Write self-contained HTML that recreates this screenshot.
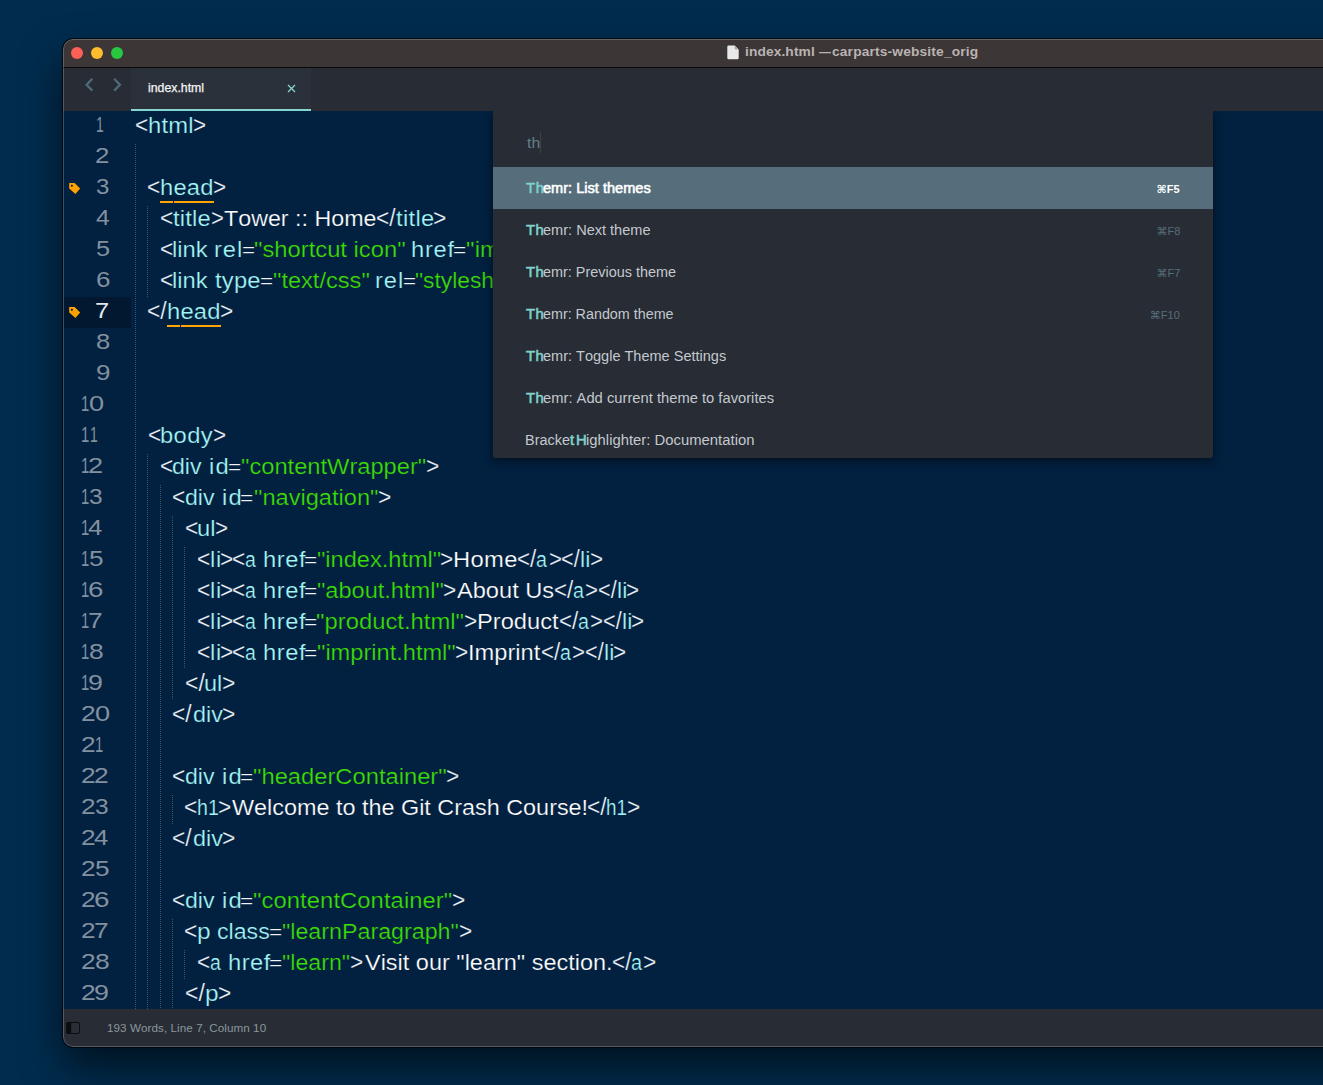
<!DOCTYPE html>
<html lang="en">
<head>
<meta charset="utf-8">
<title>index.html — carparts-website_orig</title>
<style>
*{box-sizing:border-box;margin:0;padding:0}
html,body{width:1323px;height:1085px;overflow:hidden}
body{position:relative;font-family:"Liberation Sans","DejaVu Sans",sans-serif;
 background:#012c4e;}
#win{position:absolute;left:63px;top:39px;width:1400px;height:1008px;border-radius:10px;
 background:#02203f;box-shadow:0 0 0 1px rgba(0,0,0,.7),0 20px 40px rgba(0,0,0,.6);overflow:hidden}
#win:after{content:"";position:absolute;inset:0;border-radius:10px;border:1px solid rgba(255,255,255,.22);pointer-events:none;z-index:50}
#titlebar{position:absolute;left:0;top:0;width:100%;height:29px;background:#3c3636;border-bottom:1px solid #0a0a0a}
.tl{position:absolute;top:8px;width:12px;height:12px;border-radius:50%}
.fx{position:absolute;white-space:pre;transform-origin:0 0;font-kerning:none}
.title{top:5px;font-size:13px;font-weight:bold;color:#b9b3b3;line-height:16px}
#docico{position:absolute;left:664px;top:6px}
#tabbar{position:absolute;left:0;top:29px;width:100%;height:43px;background:#282c35}
#tab{position:absolute;left:68px;top:0;width:180px;height:43px;background:#2b313b}
#tab:after{content:"";position:absolute;left:0;right:0;bottom:0;height:2.5px;background:#84d5cf}
#tabname{top:13px;font-size:12px;color:#f2f4f5;line-height:14px;-webkit-text-stroke:0.25px #f2f4f5}
#editor{position:absolute;left:0;top:72px;width:100%;height:899px;background:#02203f}
#status{position:absolute;left:0;top:970px;width:100%;height:38px;background:#282c35}
#stext{top:12px;font-size:11px;line-height:14px;color:#8b979c}
.ln{position:absolute;left:0;white-space:pre;font-size:22px;line-height:31px;height:31px;color:#fff}
.ln span{position:absolute;top:0px;-webkit-text-stroke:0.22px #02203f;transform-origin:0 0;font-kerning:none}
.num{position:absolute;left:0;font-size:22px;line-height:31px;height:31px;color:#8291a0;white-space:pre}
.num span{position:absolute;top:-1px;transform-origin:0 0}
.num.cur{color:#dfe6ec}
.ln .p{color:#f0f4fa;font-size:23.5px;top:0px}.ln .e{font-size:19px;top:0px}
.t{color:#a4f6f7}.s{color:#3cdc05}.w{color:#fff}
#layer{position:absolute;left:0;top:0;width:1323px;height:1085px;overflow:hidden;pointer-events:none}
#clip{position:absolute;left:63px;top:111px;width:1260px;height:898px;overflow:hidden}
#clip>div{position:absolute;left:-63px;top:-111px;width:1323px;height:1085px}
#gutcur{position:absolute;left:64px;top:297px;width:67px;height:30.5px;background:#021830}
.ul{position:absolute;height:2px;background:#ffa400}
.tag{position:absolute;left:68px}
.guide{position:absolute;width:1px;background:repeating-linear-gradient(180deg,#3b546e 0,#3b546e 1px,transparent 1px,transparent 2px)}
#palclip{position:absolute;left:0;top:111px;width:1323px;height:500px;overflow:hidden;pointer-events:none}
#pal{position:absolute;left:492.5px;top:0;width:720.7px;height:347px;background:#282c35;box-shadow:0 3px 10px rgba(0,0,0,.5);border-radius:0 0 3px 3px;overflow:hidden}
.row{position:absolute;left:0;width:720px;height:42px;font-size:14px;line-height:42px;color:#c3c9ce;white-space:nowrap}
.row .fx{top:0px}
.row .key{font-size:11px;color:#566e7a;top:1px}
.row b{color:#7fd1c9;font-weight:normal}
.sb{-webkit-text-stroke:0.55px currentColor}
.sb b{-webkit-text-stroke:0.55px #7fd1c9}
.row.sel{background:#566e7b;color:#fff}
.row.sel .key{color:#fff;font-weight:bold}
#pin{top:22px;font-size:15px;line-height:20px;color:#62808c}
</style>
</head>
<body>
<div id="win">
 <div id="titlebar">
  <div class="tl" style="left:8px;background:#fe5f57"></div>
  <div class="tl" style="left:28px;background:#febc2e"></div>
  <div class="tl" style="left:48px;background:#28c840"></div>
  <svg id="docico" width="13" height="15" viewBox="0 0 13 15"><path d="M1.5 0.5h6.2l4 4v8.6a1.2 1.2 0 0 1-1.2 1.2h-9a1.2 1.2 0 0 1-1.2-1.2v-11.4a1.2 1.2 0 0 1 1.2-1.2z" fill="#e9e9e9"/><path d="M7.7 0.5v3a1 1 0 0 0 1 1h3z" fill="#a9a9a9"/></svg>
  <div class="fx title" style="left:682.14px;letter-spacing:0.087px;transform:scaleX(1.060)">index.html</div><div class="fx title" style="left:755.80px;transform:scaleX(0.923)">—</div><div class="fx title" style="left:769.36px;letter-spacing:0.139px;transform:scaleX(1.060)">carparts-website_orig</div>
 </div>
 <div id="tabbar">
  <svg style="position:absolute;left:21px;top:9px" width="40" height="16" viewBox="0 0 40 16"><path d="M8.3 1.8L2.6 7.8L8.3 13.6" fill="none" stroke="#4e6a79" stroke-width="2.3"/><path d="M30.2 1.8L35.9 7.8L30.2 13.6" fill="none" stroke="#4e6a79" stroke-width="2.3"/></svg>
  <div id="tab"><div id="tabname" class="fx" style="left:17.08px;transform:scaleX(1.025)">index.html</div>
   <svg style="position:absolute;left:156px;top:16px" width="9" height="9" viewBox="0 0 9 9"><path d="M1 1L8 8M8 1L1 8" stroke="#84d5cf" stroke-width="1.3" fill="none"/></svg>
  </div>
 </div>
 <div id="editor"></div>
 <div id="status">
  <svg style="position:absolute;left:3px;top:13px" width="14" height="12" viewBox="0 0 14 12"><rect x="0.5" y="0.5" width="13" height="11" rx="1.6" fill="#2a2e37" stroke="#0d0e11"/><path d="M2 0.5h3.2v11h-3.2a1.5 1.5 0 0 1-1.5-1.5v-8a1.5 1.5 0 0 1 1.5-1.5z" fill="#0b0c0f"/></svg>
  <div id="stext" class="fx" style="left:44.31px;letter-spacing:0.058px;transform:scaleX(1.060)">193 Words, Line 7, Column 10</div>
 </div>
</div>
<div id="clip"><div>
 <div id="gutcur"></div>
 <svg class="tag" style="top:182px" width="13" height="13" viewBox="0 0 13 13"><path fill-rule="evenodd" fill="#ffa200" d="M1.2 1H6.6L12.2 6.6L7.4 12L1.2 6.5ZM3.9 2.75a0.95 0.95 0 1 0 0.001 0Z"/></svg>
 <svg class="tag" style="top:306px" width="13" height="13" viewBox="0 0 13 13"><path fill-rule="evenodd" fill="#ffa200" d="M1.2 1H6.6L12.2 6.6L7.4 12L1.2 6.5ZM3.9 2.75a0.95 0.95 0 1 0 0.001 0Z"/></svg>
 <div class="ul" style="left:159.9px;top:201px;width:13.1px"></div><div class="ul" style="left:174px;top:201px;width:40.1px"></div>
 <div class="ul" style="left:166.9px;top:325px;width:13.1px"></div><div class="ul" style="left:181px;top:325px;width:40.1px"></div>
 <div class="guide" style="left:135.0px;top:144px;height:865px"></div>
<div class="guide" style="left:147.3px;top:206px;height:91px"></div>
<div class="guide" style="left:147.3px;top:454px;height:555px"></div>
<div class="guide" style="left:159.6px;top:485px;height:524px"></div>
<div class="guide" style="left:171.9px;top:516px;height:184px"></div>
<div class="guide" style="left:171.9px;top:795px;height:29px"></div>
<div class="guide" style="left:171.9px;top:919px;height:90px"></div>
<div class="guide" style="left:184.2px;top:547px;height:122px"></div>
<div class="guide" style="left:184.2px;top:950px;height:29px"></div>
<div class="num" id="N1" style="top:110px"><span style="left:95.54px;transform:scaleX(0.633)">1</span></div>
<div class="num" id="N2" style="top:141px"><span style="left:95.30px;transform:scaleX(1.177)">2</span></div>
<div class="num" id="N3" style="top:172px"><span style="left:95.68px;transform:scaleX(1.093)">3</span></div>
<div class="num" id="N4" style="top:203px"><span style="left:95.64px;transform:scaleX(1.119)">4</span></div>
<div class="num" id="N5" style="top:234px"><span style="left:95.99px;transform:scaleX(1.150)">5</span></div>
<div class="num" id="N6" style="top:265px"><span style="left:95.68px;transform:scaleX(1.182)">6</span></div>
<div class="num cur" id="N7" style="top:296px"><span style="left:94.69px;transform:scaleX(1.160)">7</span></div>
<div class="num" id="N8" style="top:327px"><span style="left:95.89px;transform:scaleX(1.162)">8</span></div>
<div class="num" id="N9" style="top:358px"><span style="left:95.58px;transform:scaleX(1.181)">9</span></div>
<div class="num" id="N10" style="top:389px"><span style="left:80.87px;transform:scaleX(0.675)">1</span><span style="left:88.94px;transform:scaleX(1.236)">0</span></div>
<div class="num" id="N11" style="top:420px"><span style="left:80.87px;transform:scaleX(0.675)">1</span><span style="left:89.54px;transform:scaleX(0.633)">1</span></div>
<div class="num" id="N12" style="top:451px"><span style="left:80.87px;transform:scaleX(0.675)">1</span><span style="left:88.23px;transform:scaleX(1.237)">2</span></div>
<div class="num" id="N13" style="top:482px"><span style="left:80.87px;transform:scaleX(0.675)">1</span><span style="left:89.07px;transform:scaleX(1.112)">3</span></div>
<div class="num" id="N14" style="top:513px"><span style="left:80.87px;transform:scaleX(0.675)">1</span><span style="left:88.41px;transform:scaleX(1.173)">4</span></div>
<div class="num" id="N15" style="top:544px"><span style="left:80.87px;transform:scaleX(0.675)">1</span><span style="left:88.95px;transform:scaleX(1.189)">5</span></div>
<div class="num" id="N16" style="top:575px"><span style="left:80.87px;transform:scaleX(0.675)">1</span><span style="left:88.19px;transform:scaleX(1.261)">6</span></div>
<div class="num" id="N17" style="top:606px"><span style="left:80.87px;transform:scaleX(0.675)">1</span><span style="left:87.65px;transform:scaleX(1.200)">7</span></div>
<div class="num" id="N18" style="top:637px"><span style="left:80.87px;transform:scaleX(0.675)">1</span><span style="left:88.85px;transform:scaleX(1.201)">8</span></div>
<div class="num" id="N19" style="top:668px"><span style="left:80.87px;transform:scaleX(0.675)">1</span><span style="left:88.34px;transform:scaleX(1.220)">9</span></div>
<div class="num" id="N20" style="top:699px"><span style="left:81.28px;transform:scaleX(1.197)">2</span><span style="left:94.94px;transform:scaleX(1.236)">0</span></div>
<div class="num" id="N21" style="top:730px"><span style="left:81.28px;transform:scaleX(1.197)">2</span><span style="left:94.87px;transform:scaleX(0.675)">1</span></div>
<div class="num" id="N22" style="top:761px"><span style="left:81.28px;transform:scaleX(1.197)">2</span><span style="left:94.28px;transform:scaleX(1.197)">2</span></div>
<div class="num" id="N23" style="top:792px"><span style="left:81.28px;transform:scaleX(1.197)">2</span><span style="left:95.07px;transform:scaleX(1.112)">3</span></div>
<div class="num" id="N24" style="top:823px"><span style="left:81.28px;transform:scaleX(1.197)">2</span><span style="left:94.41px;transform:scaleX(1.173)">4</span></div>
<div class="num" id="N25" style="top:854px"><span style="left:81.28px;transform:scaleX(1.197)">2</span><span style="left:94.95px;transform:scaleX(1.189)">5</span></div>
<div class="num" id="N26" style="top:885px"><span style="left:81.28px;transform:scaleX(1.197)">2</span><span style="left:94.19px;transform:scaleX(1.261)">6</span></div>
<div class="num" id="N27" style="top:916px"><span style="left:81.28px;transform:scaleX(1.197)">2</span><span style="left:93.65px;transform:scaleX(1.200)">7</span></div>
<div class="num" id="N28" style="top:947px"><span style="left:81.28px;transform:scaleX(1.197)">2</span><span style="left:94.85px;transform:scaleX(1.201)">8</span></div>
<div class="num" id="N29" style="top:978px"><span style="left:81.28px;transform:scaleX(1.197)">2</span><span style="left:94.34px;transform:scaleX(1.220)">9</span></div>
<div class="ln" id="L1" style="top:110px"><span class="p" style="left:135.08px;transform:scaleX(0.963)">&lt;</span><span class="t" style="left:147.55px;letter-spacing:0.23px;transform:scaleX(1.080)">html</span><span class="p" style="left:192.79px;transform:scaleX(0.955)">&gt;</span></div>
<div class="ln" id="L3" style="top:172px"><span class="p" style="left:147.38px;transform:scaleX(0.963)">&lt;</span><span class="t" style="left:159.85px;letter-spacing:0.19px;transform:scaleX(1.080)">head</span><span class="p" style="left:212.99px;transform:scaleX(0.955)">&gt;</span></div>
<div class="ln" id="L4" style="top:203px"><span class="p" style="left:159.57px;transform:scaleX(0.972)">&lt;</span><span class="t" style="left:173.34px;letter-spacing:0.19px;transform:scaleX(1.080)">title</span><span class="p" style="left:211.21px;transform:scaleX(0.937)">&gt;</span><span class="w" style="left:223.78px;transform:scaleX(1.057)">Tower :: Home</span><span class="p" style="left:375.98px;transform:scaleX(0.964)">&lt;/</span><span class="t" style="left:395.84px;letter-spacing:0.29px;transform:scaleX(1.080)">title</span><span class="p" style="left:433.17px;transform:scaleX(0.972)">&gt;</span></div>
<div class="ln" id="L5" style="top:234px"><span class="p" style="left:159.57px;transform:scaleX(0.972)">&lt;</span><span class="t" style="left:172.10px;transform:scaleX(1.080)">link</span><span class="t" style="left:214.42px;letter-spacing:0.82px;transform:scaleX(1.080)">rel</span><span class="p e" style="left:241.60px;transform:scaleX(1.181)">=</span><span class="s" style="left:254.49px;transform:scaleX(1.080)">"shortcut icon"</span><span class="t" style="left:411.35px;letter-spacing:0.67px;transform:scaleX(1.080)">href</span><span class="p e" style="left:453.09px;transform:scaleX(1.192)">=</span><span class="s" style="left:465.69px;letter-spacing:0.18px;transform:scaleX(1.080)">"img/favicon.ico"</span><span class="p" style="left:642.26px;transform:scaleX(0.963)">&gt;</span></div>
<div class="ln" id="L6" style="top:265px"><span class="p" style="left:159.57px;transform:scaleX(0.972)">&lt;</span><span class="t" style="left:172.10px;transform:scaleX(1.080)">link</span><span class="t" style="left:215.24px;letter-spacing:0.19px;transform:scaleX(1.080)">type</span><span class="p e" style="left:260.30px;transform:scaleX(1.181)">=</span><span class="s" style="left:273.20px;transform:scaleX(1.073)">"text/css"</span><span class="t" style="left:375.32px;letter-spacing:0.82px;transform:scaleX(1.080)">rel</span><span class="p e" style="left:402.50px;transform:scaleX(1.181)">=</span><span class="s" style="left:415.23px;transform:scaleX(1.035)">"stylesheet"</span><span class="t" style="left:539.30px;letter-spacing:1.20px;transform:scaleX(1.080)">href</span><span class="p e" style="left:583.07px;transform:scaleX(1.181)">=</span><span class="s" style="left:595.56px;letter-spacing:1.15px;transform:scaleX(1.080)">"css/style.css"</span><span class="p" style="left:762.53px;transform:scaleX(0.963)">&gt;</span></div>
<div class="ln" id="L7" style="top:296px"><span class="p" style="left:147.37px;transform:scaleX(0.974)">&lt;/</span><span class="t" style="left:166.95px;letter-spacing:0.16px;transform:scaleX(1.080)">head</span><span class="p" style="left:219.98px;transform:scaleX(0.963)">&gt;</span></div>
<div class="ln" id="L11" style="top:420px"><span class="p" style="left:147.57px;transform:scaleX(0.972)">&lt;</span><span class="t" style="left:160.17px;letter-spacing:0.36px;transform:scaleX(1.080)">body</span><span class="p" style="left:212.99px;transform:scaleX(0.955)">&gt;</span></div>
<div class="ln" id="L12" style="top:451px"><span class="p" style="left:159.98px;transform:scaleX(0.963)">&lt;</span><span class="t" style="left:172.33px;transform:scaleX(1.051)">div</span><span class="t" style="left:209.21px;letter-spacing:1.14px;transform:scaleX(1.080)">id</span><span class="p e" style="left:228.09px;transform:scaleX(1.192)">=</span><span class="s" style="left:241.29px;transform:scaleX(1.076)">"contentWrapper"</span><span class="p" style="left:426.37px;transform:scaleX(0.972)">&gt;</span></div>
<div class="ln" id="L13" style="top:482px"><span class="p" style="left:172.28px;transform:scaleX(0.963)">&lt;</span><span class="t" style="left:184.63px;transform:scaleX(1.051)">div</span><span class="t" style="left:221.51px;letter-spacing:1.14px;transform:scaleX(1.080)">id</span><span class="p e" style="left:240.39px;transform:scaleX(1.192)">=</span><span class="s" style="left:253.50px;transform:scaleX(1.074)">"navigation"</span><span class="p" style="left:377.67px;transform:scaleX(0.972)">&gt;</span></div>
<div class="ln" id="L14" style="top:513px"><span class="p" style="left:184.67px;transform:scaleX(0.972)">&lt;</span><span class="t" style="left:197.46px;letter-spacing:0.04px;transform:scaleX(1.080)">ul</span><span class="p" style="left:215.29px;transform:scaleX(0.955)">&gt;</span></div>
<div class="ln" id="L15" style="top:544px"><span class="p" style="left:196.77px;transform:scaleX(0.972)">&lt;</span><span class="t" style="left:209.60px;letter-spacing:0.69px;transform:scaleX(1.080)">li</span><span class="p" style="left:219.68px;transform:scaleX(0.963)">&gt;</span><span class="p" style="left:231.88px;transform:scaleX(0.963)">&lt;</span><span class="t" style="left:244.67px;transform:scaleX(0.885)">a</span><span class="t" style="left:262.85px;letter-spacing:0.48px;transform:scaleX(1.080)">href</span><span class="p e" style="left:303.89px;transform:scaleX(1.192)">=</span><span class="s" style="left:316.50px;transform:scaleX(1.072)">"index.html"</span><span class="p" style="left:440.38px;transform:scaleX(0.963)">&gt;</span><span class="w" style="left:452.75px;letter-spacing:0.32px;transform:scaleX(1.080)">Home</span><span class="p" style="left:516.80px;transform:scaleX(0.953)">&lt;/</span><span class="t" style="left:536.26px;transform:scaleX(0.894)">a</span><span class="p" style="left:548.60px;transform:scaleX(0.946)">&gt;</span><span class="p" style="left:560.93px;transform:scaleX(0.922)">&lt;/</span><span class="t" style="left:580.23px;transform:scaleX(1.057)">li</span><span class="p" style="left:589.79px;transform:scaleX(0.955)">&gt;</span></div>
<div class="ln" id="L16" style="top:575px"><span class="p" style="left:196.77px;transform:scaleX(0.972)">&lt;</span><span class="t" style="left:209.60px;letter-spacing:0.69px;transform:scaleX(1.080)">li</span><span class="p" style="left:219.68px;transform:scaleX(0.963)">&gt;</span><span class="p" style="left:231.88px;transform:scaleX(0.963)">&lt;</span><span class="t" style="left:244.67px;transform:scaleX(0.885)">a</span><span class="t" style="left:262.85px;letter-spacing:0.48px;transform:scaleX(1.080)">href</span><span class="p e" style="left:303.89px;transform:scaleX(1.192)">=</span><span class="s" style="left:316.50px;transform:scaleX(1.071)">"about.html"</span><span class="p" style="left:443.28px;transform:scaleX(0.963)">&gt;</span><span class="w" style="left:456.55px;transform:scaleX(1.073)">About Us</span><span class="p" style="left:553.50px;transform:scaleX(0.953)">&lt;/</span><span class="t" style="left:572.96px;transform:scaleX(0.894)">a</span><span class="p" style="left:585.30px;transform:scaleX(0.946)">&gt;</span><span class="p" style="left:597.63px;transform:scaleX(0.922)">&lt;/</span><span class="t" style="left:616.93px;transform:scaleX(1.057)">li</span><span class="p" style="left:626.49px;transform:scaleX(0.955)">&gt;</span></div>
<div class="ln" id="L17" style="top:606px"><span class="p" style="left:196.77px;transform:scaleX(0.972)">&lt;</span><span class="t" style="left:209.60px;letter-spacing:0.69px;transform:scaleX(1.080)">li</span><span class="p" style="left:219.68px;transform:scaleX(0.963)">&gt;</span><span class="p" style="left:231.88px;transform:scaleX(0.963)">&lt;</span><span class="t" style="left:244.67px;transform:scaleX(0.885)">a</span><span class="t" style="left:262.85px;letter-spacing:0.48px;transform:scaleX(1.080)">href</span><span class="p e" style="left:303.89px;transform:scaleX(1.192)">=</span><span class="s" style="left:316.49px;letter-spacing:0.03px;transform:scaleX(1.080)">"product.html"</span><span class="p" style="left:463.98px;transform:scaleX(0.963)">&gt;</span><span class="w" style="left:476.76px;transform:scaleX(1.076)">Product</span><span class="p" style="left:558.50px;transform:scaleX(0.953)">&lt;/</span><span class="t" style="left:577.96px;transform:scaleX(0.894)">a</span><span class="p" style="left:590.30px;transform:scaleX(0.946)">&gt;</span><span class="p" style="left:602.63px;transform:scaleX(0.922)">&lt;/</span><span class="t" style="left:621.93px;transform:scaleX(1.057)">li</span><span class="p" style="left:631.49px;transform:scaleX(0.955)">&gt;</span></div>
<div class="ln" id="L18" style="top:637px"><span class="p" style="left:196.77px;transform:scaleX(0.972)">&lt;</span><span class="t" style="left:209.60px;letter-spacing:0.69px;transform:scaleX(1.080)">li</span><span class="p" style="left:219.68px;transform:scaleX(0.963)">&gt;</span><span class="p" style="left:231.88px;transform:scaleX(0.963)">&lt;</span><span class="t" style="left:244.67px;transform:scaleX(0.885)">a</span><span class="t" style="left:262.85px;letter-spacing:0.48px;transform:scaleX(1.080)">href</span><span class="p e" style="left:303.89px;transform:scaleX(1.192)">=</span><span class="s" style="left:316.50px;transform:scaleX(1.073)">"imprint.html"</span><span class="p" style="left:454.98px;transform:scaleX(0.963)">&gt;</span><span class="w" style="left:467.52px;transform:scaleX(1.075)">Imprint</span><span class="p" style="left:540.50px;transform:scaleX(0.953)">&lt;/</span><span class="t" style="left:559.96px;transform:scaleX(0.894)">a</span><span class="p" style="left:572.30px;transform:scaleX(0.946)">&gt;</span><span class="p" style="left:584.63px;transform:scaleX(0.922)">&lt;/</span><span class="t" style="left:603.93px;transform:scaleX(1.057)">li</span><span class="p" style="left:613.49px;transform:scaleX(0.955)">&gt;</span></div>
<div class="ln" id="L19" style="top:668px"><span class="p" style="left:184.76px;transform:scaleX(0.979)">&lt;/</span><span class="t" style="left:204.37px;transform:scaleX(1.069)">ul</span><span class="p" style="left:222.17px;transform:scaleX(0.972)">&gt;</span></div>
<div class="ln" id="L20" style="top:699px"><span class="p" style="left:172.38px;transform:scaleX(0.969)">&lt;/</span><span class="t" style="left:192.52px;transform:scaleX(1.065)">div</span><span class="p" style="left:222.17px;transform:scaleX(0.972)">&gt;</span></div>
<div class="ln" id="L22" style="top:761px"><span class="p" style="left:172.28px;transform:scaleX(0.963)">&lt;</span><span class="t" style="left:184.63px;transform:scaleX(1.051)">div</span><span class="t" style="left:221.51px;letter-spacing:1.14px;transform:scaleX(1.080)">id</span><span class="p e" style="left:240.39px;transform:scaleX(1.192)">=</span><span class="s" style="left:253.49px;transform:scaleX(1.079)">"headerContainer"</span><span class="p" style="left:446.38px;transform:scaleX(0.963)">&gt;</span></div>
<div class="ln" id="L23" style="top:792px"><span class="p" style="left:184.47px;transform:scaleX(0.972)">&lt;</span><span class="t" style="left:197.24px;transform:scaleX(0.892)">h1</span><span class="p" style="left:217.98px;transform:scaleX(0.963)">&gt;</span><span class="w" style="left:231.60px;transform:scaleX(1.063)">Welcome to the Git Crash Course!</span><span class="p" style="left:586.58px;transform:scaleX(0.969)">&lt;/</span><span class="t" style="left:606.29px;transform:scaleX(0.860)">h1</span><span class="p" style="left:626.88px;transform:scaleX(0.963)">&gt;</span></div>
<div class="ln" id="L24" style="top:823px"><span class="p" style="left:172.38px;transform:scaleX(0.969)">&lt;/</span><span class="t" style="left:192.52px;transform:scaleX(1.065)">div</span><span class="p" style="left:222.17px;transform:scaleX(0.972)">&gt;</span></div>
<div class="ln" id="L26" style="top:885px"><span class="p" style="left:172.28px;transform:scaleX(0.963)">&lt;</span><span class="t" style="left:184.63px;transform:scaleX(1.051)">div</span><span class="t" style="left:221.51px;letter-spacing:1.14px;transform:scaleX(1.080)">id</span><span class="p e" style="left:240.39px;transform:scaleX(1.192)">=</span><span class="s" style="left:253.49px;letter-spacing:0.08px;transform:scaleX(1.080)">"contentContainer"</span><span class="p" style="left:451.98px;transform:scaleX(0.963)">&gt;</span></div>
<div class="ln" id="L27" style="top:916px"><span class="p" style="left:184.47px;transform:scaleX(0.972)">&lt;</span><span class="t" style="left:196.92px;transform:scaleX(1.112)">p</span><span class="t" style="left:216.72px;transform:scaleX(1.052)">class</span><span class="p e" style="left:268.69px;transform:scaleX(1.192)">=</span><span class="s" style="left:282.21px;transform:scaleX(1.057)">"learnParagraph"</span><span class="p" style="left:458.58px;transform:scaleX(0.963)">&gt;</span></div>
<div class="ln" id="L28" style="top:947px"><span class="p" style="left:196.88px;transform:scaleX(0.963)">&lt;</span><span class="t" style="left:209.67px;transform:scaleX(0.885)">a</span><span class="t" style="left:227.85px;letter-spacing:0.42px;transform:scaleX(1.080)">href</span><span class="p e" style="left:268.69px;transform:scaleX(1.192)">=</span><span class="s" style="left:282.21px;transform:scaleX(1.055)">"learn"</span><span class="p" style="left:350.18px;transform:scaleX(0.963)">&gt;</span><span class="w" style="left:364.80px;transform:scaleX(1.067)">Visit our "learn" section.</span><span class="p" style="left:611.59px;transform:scaleX(0.958)">&lt;/</span><span class="t" style="left:631.16px;transform:scaleX(0.903)">a</span><span class="p" style="left:643.28px;transform:scaleX(0.963)">&gt;</span></div>
<div class="ln" id="L29" style="top:978px"><span class="p" style="left:184.76px;transform:scaleX(0.979)">&lt;/</span><span class="t" style="left:204.92px;transform:scaleX(1.112)">p</span><span class="p" style="left:217.58px;transform:scaleX(0.963)">&gt;</span></div>
</div></div>
<div id="palclip"><div id="pal">
<div id="pin" class="fx" style="left:34.56px;transform:scaleX(1.052)">th</div>
<div style="position:absolute;left:47px;top:21px;width:1.5px;height:21px;background:#3b424c"></div>
<div class="row sel" style="top:56px"><span class="fx sb" style="left:33.17px;letter-spacing:0.546px;transform:scaleX(1.060)"><b>Th</b></span><span class="fx sb" style="left:50.28px;transform:scaleX(1.041)">emr: List themes</span><span class="fx key" style="left:664.1px">⌘F5</span></div>
<div class="row" style="top:98px"><span class="fx sb" style="left:33.17px;letter-spacing:0.452px;transform:scaleX(1.060)"><b>Th</b></span><span class="fx" style="left:50.48px;transform:scaleX(1.039)">emr: Next theme</span><span class="fx key" style="left:664.1px">⌘F8</span></div>
<div class="row" style="top:140px"><span class="fx sb" style="left:33.17px;letter-spacing:0.452px;transform:scaleX(1.060)"><b>Th</b></span><span class="fx" style="left:50.49px;transform:scaleX(1.030)">emr: Previous theme</span><span class="fx key" style="left:664.1px">⌘F7</span></div>
<div class="row" style="top:182px"><span class="fx sb" style="left:33.17px;letter-spacing:0.452px;transform:scaleX(1.060)"><b>Th</b></span><span class="fx" style="left:50.49px;transform:scaleX(1.023)">emr: Random theme</span><span class="fx key" style="left:657.3px">⌘F10</span></div>
<div class="row" style="top:224px"><span class="fx sb" style="left:33.17px;letter-spacing:0.452px;transform:scaleX(1.060)"><b>Th</b></span><span class="fx" style="left:50.48px;transform:scaleX(1.037)">emr: Toggle Theme Settings</span></div>
<div class="row" style="top:266px"><span class="fx sb" style="left:33.17px;letter-spacing:0.452px;transform:scaleX(1.060)"><b>Th</b></span><span class="fx" style="left:50.47px;transform:scaleX(1.053)">emr: Add current theme to favorites</span></div>
<div class="row" style="top:308px"><span class="fx" style="left:32.62px;transform:scaleX(1.031)">Bracke</span><span class="fx sb" style="left:77.48px;letter-spacing:1.693px;transform:scaleX(1.060)"><b>tH</b></span><span class="fx" style="left:93.11px;letter-spacing:0.007px;transform:scaleX(1.060)">ighlighter: Documentation</span></div>
</div></div>
</body>
</html>
